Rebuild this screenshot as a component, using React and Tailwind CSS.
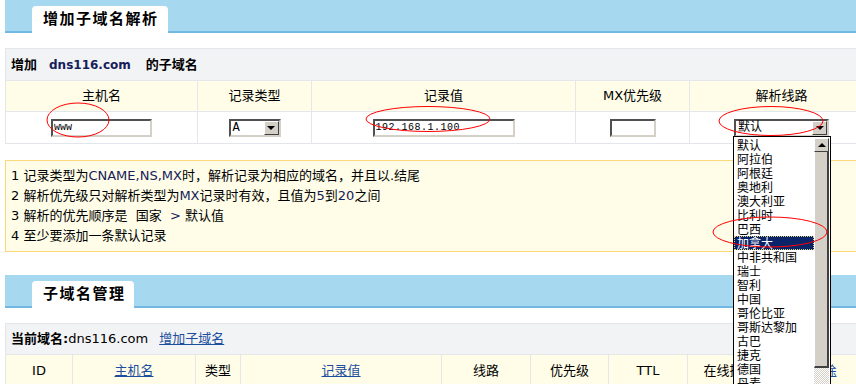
import React from 'react'

const lines = ['默认', '阿拉伯', '阿根廷', '奥地利', '澳大利亚', '比利时', '巴西', '加拿大', '中非共和国', '瑞士', '智利', '中国', '哥伦比亚', '哥斯达黎加', '古巴', '捷克', '德国', '丹麦']

function Band({ title, w }) {
  return (
    <div className="h-[33px] bg-[#a6d9ef] border-b-2 border-[#72b8e3] flex items-end pl-[27px]">
      <div className={`${w} h-[27px] -mb-[2px] bg-white rounded-t-[4px] pl-[11px] flex items-center text-[15px] font-bold tracking-[1.5px] text-black`}>
        {title}
      </div>
    </div>
  )
}

function Inset({ className, children }) {
  return (
    <div className={`h-[18px] bg-white border-2 border-t-[#505050] border-l-[#505050] border-b-[#d4d0c8] border-r-[#d4d0c8] flex items-center ${className}`}>
      {children}
    </div>
  )
}

function DropBtn({ up }) {
  return (
    <div className="w-[15px] h-[14px] bg-[#d4d0c8] border border-t-white border-l-white border-b-[#404040] border-r-[#404040] flex items-center justify-center">
      <div className={`w-0 h-0 border-l-[4px] border-r-[4px] border-l-transparent border-r-transparent ${up ? 'border-b-[4px] border-b-black' : 'border-t-[4px] border-t-black'}`} />
    </div>
  )
}

function Select({ className, value }) {
  return (
    <Inset className={`justify-between ${className}`}>
      <span className="pl-[2px] text-[12px] leading-none font-['Liberation_Mono','Noto_Sans_CJK_SC',monospace]">{value}</span>
      <DropBtn />
    </Inset>
  )
}

export default function App() {
  const hd = 'h-[31px] bg-[#fffde8] border-r border-b border-[#e3e6eb] flex items-center justify-center'
  const td = 'h-[32px] bg-white border-r border-b border-[#e3e6eb] flex items-center justify-center'
  const hd2 = 'h-[31px] bg-[#fffde8] border-r border-[#e3e6eb] flex items-center justify-center'

  return (
    <div className="w-[856px] h-[384px] overflow-hidden bg-white relative text-[13px] text-black font-['DejaVu_Sans','Noto_Sans_CJK_SC',sans-serif]">
      <div className="pl-[5px] w-[880px]">
        <Band title="增加子域名解析" w="w-[136px]" />

        <div className="mt-[15px] h-[32px] bg-[#f2f3f5] border border-b-0 border-[#e3e6eb] flex items-center pl-[5px] font-bold text-[13px]">
          <span>增加</span>
          <span className="ml-[12px] text-[12px] text-[#15205a]">dns116.com</span>
          <span className="ml-[15px]">的子域名</span>
        </div>

        <div className="grid grid-cols-[192px_114px_264px_114px_184px] border-l border-t border-[#e3e6eb]">
          <div className={hd}>主机名</div>
          <div className={hd}>记录类型</div>
          <div className={hd}>记录值</div>
          <div className={hd}>MX优先级</div>
          <div className={hd}>解析线路</div>

          <div className={td}>
            <Inset className="w-[101px]">
              <span className="pl-[1px] text-[10px] leading-none font-['Liberation_Mono',monospace]">www</span>
            </Inset>
          </div>
          <div className={td}>
            <Select className="w-[52px]" value="A" />
          </div>
          <div className={td}>
            <Inset className="w-[142px]">
              <span className="pl-[1px] text-[10px] leading-none tracking-[0.5px] font-['Liberation_Mono',monospace]">192.168.1.100</span>
            </Inset>
          </div>
          <div className={td}>
            <Inset className="w-[46px]" />
          </div>
          <div className={`${td} justify-start pl-[44px]`}>
            <Select className="w-[95px]" value="默认" />
          </div>
        </div>

        <div className="mt-[16px] bg-[#fffde8] border border-[#fbd77c] px-[5px] py-[5px] leading-[20px]">
          <div>1 记录类型为<span className="text-[#15205a]">CNAME,NS,MX</span>时，解析记录为相应的域名，并且以.结尾</div>
          <div>2 解析优先级只对解析类型为<span className="text-[#15205a]">MX</span>记录时有效，且值为<span className="text-[#15205a]">5</span>到<span className="text-[#15205a]">20</span>之间</div>
          <div>3 解析的优先顺序是 &nbsp;国家 &nbsp;<span className="text-[#15205a]">&gt;</span> 默认值</div>
          <div>4 至少要添加一条默认记录</div>
        </div>

        <div className="mt-[23px]">
          <Band title="子域名管理" w="w-[102px]" />
        </div>

        <div className="mt-[15px] h-[32px] bg-[#f2f3f5] border border-[#e3e6eb] flex items-center pl-[5px]">
          <span className="font-bold">当前域名:</span>
          <span>dns116.com</span>
          <a className="ml-[11px] text-[#1c4ea0] underline">增加子域名</a>
        </div>

        <div className="grid grid-cols-[67px_123px_45px_201px_89px_78px_79px_84px_104px] border-l border-[#e3e6eb]">
          <div className={hd2}>ID</div>
          <div className={hd2}><a className="text-[#1c4ea0] underline">主机名</a></div>
          <div className={hd2}>类型</div>
          <div className={hd2}><a className="text-[#1c4ea0] underline">记录值</a></div>
          <div className={hd2}>线路</div>
          <div className={hd2}>优先级</div>
          <div className={hd2}>TTL</div>
          <div className={hd2}>在线操作</div>
          <div className={hd2}><a className="text-[#1c4ea0] underline">删除</a></div>
        </div>
      </div>

      {/* opened dropdown list */}
      <div className="absolute left-[733px] top-[136px] w-[98px] h-[260px] bg-white border border-black flex font-['Noto_Sans_CJK_SC',sans-serif]">
        <div className="flex-1 flex flex-col pt-[1px]">
          {lines.map((t, i) => (
            <div
              key={t}
              className={`h-[14px] leading-[14px] text-[12px] pl-[3px] ${i === 7 ? 'bg-[#0a246a] text-white outline outline-1 outline-dotted outline-[#e0d080] -outline-offset-1' : 'text-black'}`}
            >
              {t}
            </div>
          ))}
        </div>
        <div className="w-[16px] flex flex-col pt-[1px] pr-[1px]">
          <DropBtn up />
          <div className="h-[216px] bg-[#d4d0c8] border-l border-l-white border-r-2 border-r-[#404040] border-b-2 border-b-[#404040]" />
          <div className="flex-1 bg-[repeating-conic-gradient(#d4d0c8_0%_25%,#ffffff_0%_50%)] bg-[length:2px_2px]" />
        </div>
      </div>

      {/* red annotation ellipses */}
      <svg className="absolute inset-0 pointer-events-none" width="856" height="384">
        <g fill="none" stroke="#ff0000" strokeWidth="1">
          <ellipse cx="78" cy="120" rx="31" ry="17" />
          <ellipse cx="428" cy="119" rx="62" ry="12.5" />
          <ellipse cx="771" cy="121" rx="52" ry="14.5" />
          <ellipse cx="770" cy="232" rx="57" ry="15" />
        </g>
      </svg>
    </div>
  )
}
